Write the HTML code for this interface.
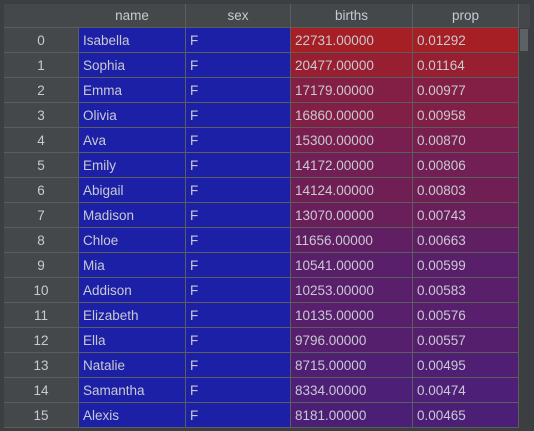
<!DOCTYPE html><html><head><style>
body{margin:0;width:534px;height:431px;background:#3c3f41;overflow:hidden;font-family:"Liberation Sans",sans-serif;font-size:13.5px;color:#c9c9d2}
#t{position:absolute;left:4px;top:4px;width:526px;height:424px;background:#45484a}
.r{position:absolute;left:0;height:24px;border-bottom:1px solid #5c5e5e;width:515px}
.c{position:absolute;top:0;height:24px;line-height:25px;border-right:1px solid #5c5e5e;box-sizing:border-box;white-space:nowrap}
.i{left:0;width:75px;text-align:center;background:#45484a}
.n{left:75px;width:107px;padding-left:4px;background:#1c20a6}
.s{left:182px;width:105px;padding-left:4px;background:#1c20a6}
.b{left:287px;width:122px;padding-left:4px}
.p{left:409px;width:106px;padding-left:4px}
.h .c{background:#45484a;text-align:center;padding:0;line-height:23px}
#sb{position:absolute;left:515px;top:24px;width:11px;height:400px;background:#3c3f41}
#th{position:absolute;left:516px;top:25px;width:8px;height:22px;background:#5e6163}
</style></head><body><div id="t">
<div class="r h" style="top:0;height:23px"><div class="c i" style="height:23px;border-right:none"></div><div class="c n" style="height:23px">name</div><div class="c s" style="height:23px">sex</div><div class="c b" style="height:23px">births</div><div class="c p" style="height:23px">prop</div></div>
<div class="r" style="top:24px"><div class="c i">0</div><div class="c n">Isabella</div><div class="c s">F</div><div class="c b" style="background:rgb(165,31,36)">22731.00000</div><div class="c p" style="background:rgb(165,31,36)">0.01292</div></div>
<div class="r" style="top:49px"><div class="c i">1</div><div class="c n">Sophia</div><div class="c s">F</div><div class="c b" style="background:rgb(151,31,49)">20477.00000</div><div class="c p" style="background:rgb(151,31,49)">0.01164</div></div>
<div class="r" style="top:74px"><div class="c i">2</div><div class="c n">Emma</div><div class="c s">F</div><div class="c b" style="background:rgb(131,31,68)">17179.00000</div><div class="c p" style="background:rgb(131,31,68)">0.00977</div></div>
<div class="r" style="top:99px"><div class="c i">3</div><div class="c n">Olivia</div><div class="c s">F</div><div class="c b" style="background:rgb(129,31,70)">16860.00000</div><div class="c p" style="background:rgb(129,31,70)">0.00958</div></div>
<div class="r" style="top:124px"><div class="c i">4</div><div class="c n">Ava</div><div class="c s">F</div><div class="c b" style="background:rgb(120,31,79)">15300.00000</div><div class="c p" style="background:rgb(120,31,79)">0.00870</div></div>
<div class="r" style="top:149px"><div class="c i">5</div><div class="c n">Emily</div><div class="c s">F</div><div class="c b" style="background:rgb(113,31,85)">14172.00000</div><div class="c p" style="background:rgb(113,31,85)">0.00806</div></div>
<div class="r" style="top:174px"><div class="c i">6</div><div class="c n">Abigail</div><div class="c s">F</div><div class="c b" style="background:rgb(112,31,85)">14124.00000</div><div class="c p" style="background:rgb(112,31,85)">0.00803</div></div>
<div class="r" style="top:199px"><div class="c i">7</div><div class="c n">Madison</div><div class="c s">F</div><div class="c b" style="background:rgb(106,31,91)">13070.00000</div><div class="c p" style="background:rgb(106,31,91)">0.00743</div></div>
<div class="r" style="top:224px"><div class="c i">8</div><div class="c n">Chloe</div><div class="c s">F</div><div class="c b" style="background:rgb(97,31,99)">11656.00000</div><div class="c p" style="background:rgb(97,31,99)">0.00663</div></div>
<div class="r" style="top:249px"><div class="c i">9</div><div class="c n">Mia</div><div class="c s">F</div><div class="c b" style="background:rgb(90,31,106)">10541.00000</div><div class="c p" style="background:rgb(90,31,106)">0.00599</div></div>
<div class="r" style="top:274px"><div class="c i">10</div><div class="c n">Addison</div><div class="c s">F</div><div class="c b" style="background:rgb(89,31,107)">10253.00000</div><div class="c p" style="background:rgb(89,31,107)">0.00583</div></div>
<div class="r" style="top:299px"><div class="c i">11</div><div class="c n">Elizabeth</div><div class="c s">F</div><div class="c b" style="background:rgb(88,31,108)">10135.00000</div><div class="c p" style="background:rgb(88,31,108)">0.00576</div></div>
<div class="r" style="top:324px"><div class="c i">12</div><div class="c n">Ella</div><div class="c s">F</div><div class="c b" style="background:rgb(86,31,110)">9796.00000</div><div class="c p" style="background:rgb(86,31,110)">0.00557</div></div>
<div class="r" style="top:349px"><div class="c i">13</div><div class="c n">Natalie</div><div class="c s">F</div><div class="c b" style="background:rgb(79,31,116)">8715.00000</div><div class="c p" style="background:rgb(79,31,116)">0.00495</div></div>
<div class="r" style="top:374px"><div class="c i">14</div><div class="c n">Samantha</div><div class="c s">F</div><div class="c b" style="background:rgb(77,31,118)">8334.00000</div><div class="c p" style="background:rgb(77,31,118)">0.00474</div></div>
<div class="r" style="top:399px"><div class="c i">15</div><div class="c n">Alexis</div><div class="c s">F</div><div class="c b" style="background:rgb(76,31,119)">8181.00000</div><div class="c p" style="background:rgb(76,31,119)">0.00465</div></div>
<div id="sb"></div><div id="th"></div>
</div></body></html>
